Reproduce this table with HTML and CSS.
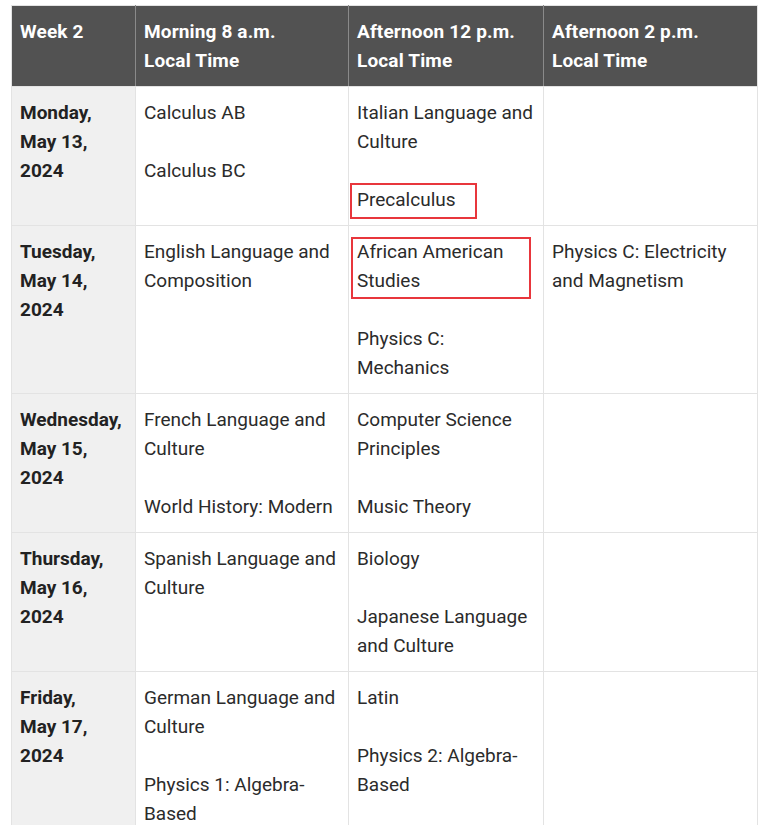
FILE: index.html
```html
<!DOCTYPE html>
<html>
<head>
<meta charset="utf-8">
<link rel="stylesheet" href="styles.css">
</head>
<body>
<div class="wrap">
<table class="sched">
  <colgroup>
    <col class="c1"><col class="c2"><col class="c3"><col class="c4">
  </colgroup>
  <thead>
    <tr>
      <th>Week 2</th>
      <th>Morning 8 a.m.<br>Local Time</th>
      <th>Afternoon 12 p.m.<br>Local Time</th>
      <th>Afternoon 2 p.m.<br>Local Time</th>
    </tr>
  </thead>
  <tbody>
    <tr>
      <td class="day">Monday,<br>May 13,<br>2024</td>
      <td><p>Calculus AB</p><p>Calculus BC</p></td>
      <td><p>Italian Language and Culture</p><p class="marked">Precalculus<span class="mark mark-a"></span></p></td>
      <td></td>
    </tr>
    <tr>
      <td class="day">Tuesday,<br>May 14,<br>2024</td>
      <td><p>English Language and Composition</p></td>
      <td><p class="marked">African American Studies<span class="mark mark-b"></span></p><p>Physics C: Mechanics</p></td>
      <td><p>Physics C: Electricity and Magnetism</p></td>
    </tr>
    <tr>
      <td class="day">Wednesday,<br>May 15,<br>2024</td>
      <td><p>French Language and Culture</p><p>World History: Modern</p></td>
      <td><p>Computer Science Principles</p><p>Music Theory</p></td>
      <td></td>
    </tr>
    <tr>
      <td class="day">Thursday,<br>May 16,<br>2024</td>
      <td><p>Spanish Language and Culture</p></td>
      <td><p>Biology</p><p>Japanese Language and Culture</p></td>
      <td></td>
    </tr>
    <tr>
      <td class="day">Friday,<br>May 17,<br>2024</td>
      <td><p>German Language and Culture</p><p>Physics 1: Algebra-Based</p></td>
      <td><p>Latin</p><p>Physics 2: Algebra-Based</p></td>
      <td></td>
    </tr>
  </tbody>
</table>
</div>
</body>
</html>
```

FILE: styles.css
```css
html, body {
  margin: 0;
  padding: 0;
  background: #ffffff;
}
body {
  font-family: Roboto, "Liberation Sans", Arial, sans-serif;
  font-size: 19px;
  line-height: 29px;
  color: #2b2b2b;
}
.wrap {
  padding: 5px 11px 0 11px;
}
.sched {
  border-collapse: collapse;
  table-layout: fixed;
  width: 746px;
}
.c1 { width: 124px; }
.c2 { width: 213px; }
.c3 { width: 195px; }
.c4 { width: 214px; }
.sched th,
.sched td {
  text-align: left;
  vertical-align: top;
  padding: 11px 8px 11px 8px;
  border: 1px solid #e3e3e3;
}
.sched th {
  background: #525252;
  color: #ffffff;
  font-weight: 700;
  letter-spacing: 0.15px;
  border-color: #8a8a8a;
  border-top-color: #e3e3e3;
  border-bottom-color: #e3e3e3;
}
.sched th:first-child { border-left-color: #e3e3e3; }
.sched th:last-child { border-right-color: #e3e3e3; }
.sched td.day {
  background: #f0f0f0;
  font-weight: 700;
  color: #222222;
}
.sched p {
  margin: 0 0 29px 0;
}
.sched p:last-child {
  margin-bottom: 0;
}
.marked {
  position: relative;
}
.mark {
  position: absolute;
  border: 2px solid #e8363c;
  box-sizing: border-box;
  pointer-events: none;
}
.mark-a {
  left: -7px;
  top: -2px;
  width: 127px;
  height: 36px;
}
.mark-b {
  left: -6px;
  top: 0px;
  width: 180px;
  height: 62px;
}
```
